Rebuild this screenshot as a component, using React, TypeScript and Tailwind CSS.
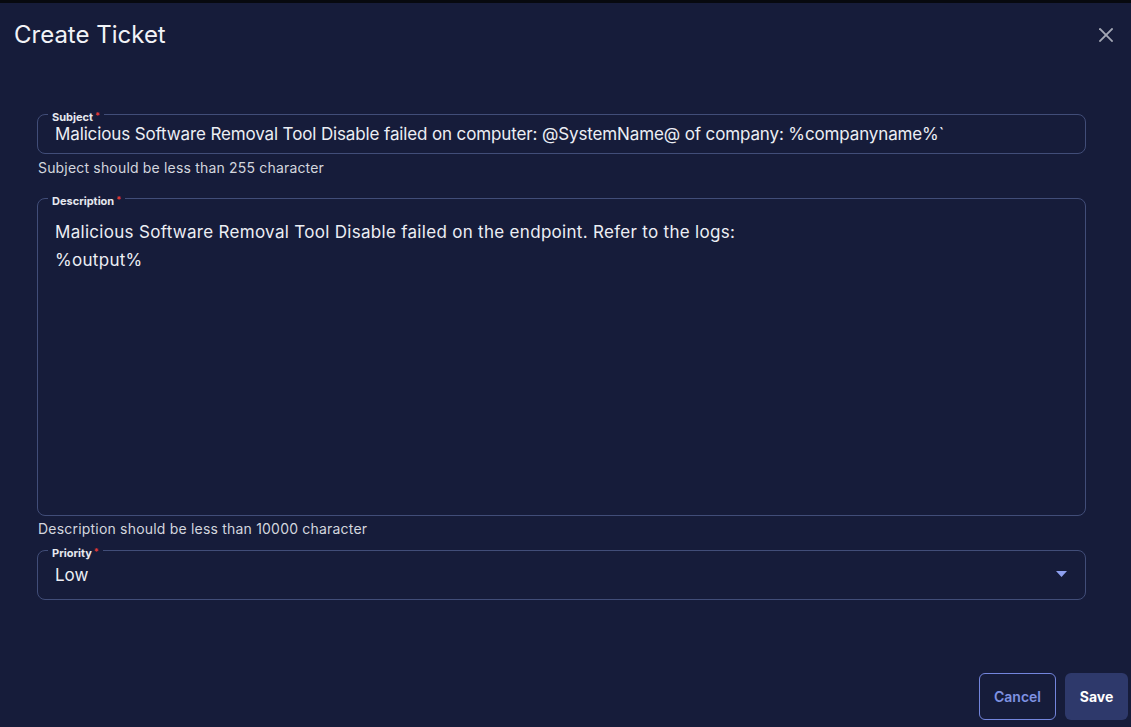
import React from "react";

function Label({ text }: { text: string }) {
  return (
    <span className="absolute -top-[4px] left-[10px] px-[4px] bg-[#161c3a] text-[11px] leading-[13px] font-bold text-[#e6e8ef] whitespace-nowrap">
      {text}
      <span className="ml-[2px] text-[9px] align-top leading-[9px] text-[#e53935]">*</span>
    </span>
  );
}

export default function App() {
  return (
    <div className="w-full h-[727px] bg-[#161c3a] flex flex-col [font-family:Inter,'Noto_Sans',sans-serif] text-[#eceef4] overflow-hidden">
      <div className="h-[3px] bg-[#07090f] shrink-0" />
      <div className="flex items-start justify-between pt-[16px] pl-[14px] pr-[18px]">
        <h1 className="text-[24px] leading-[32px] font-normal text-[#f2f3f7]">Create Ticket</h1>
        <button className="mt-[9px] w-[14px] h-[14px] text-[#a3a7b4]" aria-label="Close">
          <svg viewBox="0 0 14 14" width="14" height="14" fill="none" stroke="currentColor" strokeWidth="1.8" strokeLinecap="square">
            <line x1="1" y1="1" x2="13" y2="13" />
            <line x1="13" y1="1" x2="1" y2="13" />
          </svg>
        </button>
      </div>

      <div className="ml-[37px] w-[1049px] mt-[63px] flex flex-col">
        <div className="relative h-[40px] border border-[#414d78] rounded-[8px] flex items-center pl-[17px] pr-4">
          <Label text="Subject" />
          <span className="text-[17px] leading-[20px] tracking-[-0.13px] whitespace-nowrap">
            Malicious Software Removal Tool Disable failed on computer: @SystemName@ of company: %companyname%`
          </span>
        </div>
        <div className="mt-[4px] pl-[1px] text-[14px] leading-[20px] tracking-[0.18px] text-[#d3d6de]">Subject should be less than 255 character</div>

        <div className="relative mt-[20px] h-[318px] border border-[#414d78] rounded-[8px] pl-[17px] pr-4 pt-[19px]">
          <Label text="Description" />
          <div className="text-[17px] leading-[28px] tracking-[0.3px] whitespace-pre-wrap">
            {"Malicious Software Removal Tool Disable failed on the endpoint. Refer to the logs:\n%output%"}
          </div>
        </div>
        <div className="mt-[3px] pl-[1px] text-[14px] leading-[20px] tracking-[0.2px] text-[#d3d6de]">Description should be less than 10000 character</div>

        <div className="relative mt-[11px] h-[50px] border border-[#414d78] rounded-[8px] flex items-center justify-between pl-[17px] pr-[18px]">
          <Label text="Priority" />
          <span className="text-[17px] leading-[20px]">Low</span>
          <svg width="11" height="6" viewBox="0 0 11 6" className="mt-[-3px]">
            <polygon points="0,0 11,0 5.5,6" fill="#8ea0f0" />
          </svg>
        </div>
      </div>

      <div className="flex-1" />
      <div className="flex justify-end gap-[9px] pr-[3px] pb-[7px]">
        <button className="w-[77px] h-[47px] rounded-[6px] border border-[#7385dc] text-[#7f92e2] text-[14px] font-semibold">
          Cancel
        </button>
        <button className="w-[63px] h-[47px] rounded-[6px] bg-[#2e396b] text-white text-[14px] font-bold">
          Save
        </button>
      </div>
    </div>
  );
}
